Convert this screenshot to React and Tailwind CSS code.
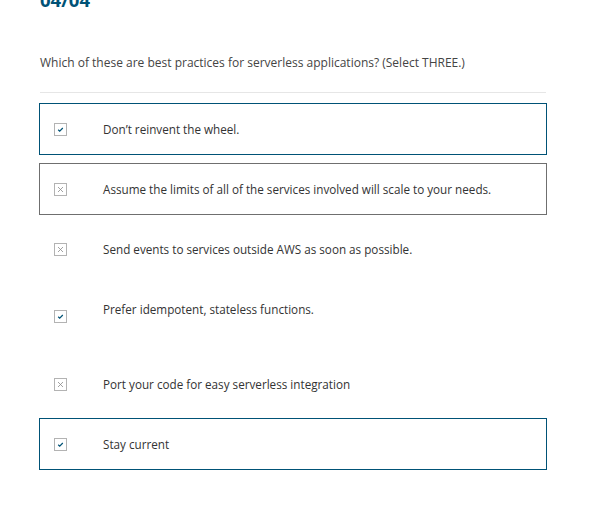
import React from "react";

const options = [
  { text: "Don’t reinvent the wheel.", checked: true, border: "sel" },
  { text: "Assume the limits of all of the services involved will scale to your needs.", checked: false, border: "gray" },
  { text: "Send events to services outside AWS as soon as possible.", checked: false, border: "none" },
  { text: "Prefer idempotent, stateless functions.", checked: true, border: "none", extra: true },
  { text: "Port your code for easy serverless integration", checked: false, border: "none" },
  { text: "Stay current", checked: true, border: "sel" },
];

function Box({ checked }) {
  return (
    <div className="w-[13px] h-[13px] border border-[#b3b3b3] bg-white flex items-center justify-center shrink-0">
      {checked ? (
        <svg width="9" height="9" viewBox="0 0 9 9">
          <path d="M2.2 4.8 L3.7 6.2 L6.8 3" fill="none" stroke="#005276" strokeWidth="1.2" />
        </svg>
      ) : (
        <svg width="9" height="9" viewBox="0 0 9 9">
          <path d="M2 2 L7 7 M7 2 L2 7" fill="none" stroke="#8a8a8a" strokeWidth="0.8" />
        </svg>
      )}
    </div>
  );
}

export default function App() {
  return (
    <div className="w-[613px] h-[515px] bg-white overflow-hidden" style={{ fontFamily: "'Open Sans', sans-serif" }}>
      <div className="px-10">
        <div className="text-[18.5px] leading-[28px] font-bold text-[#005276] -mt-[14px]">04/04</div>
        <div className="mt-[41px] text-[12px] leading-[16px] text-[#444]">
          Which of these are best practices for serverless applications? (Select THREE.)
        </div>
        <div className="mt-[21px] h-px bg-[#e6e6e6] w-[506px]"></div>
        <div className="mt-[10px] -ml-px w-[508px] flex flex-col gap-[8px]">
          {options.map((o, i) => (
            <div
              key={i}
              className={
                "flex items-center px-[14px] py-[18px] border " +
                (o.border === "sel"
                  ? "border-[#005276]"
                  : o.border === "gray"
                  ? "border-[#6f6f6f]"
                  : "border-transparent")
              }
            >
              <Box checked={o.checked} />
              <div className="ml-[36px] text-[11.7px] leading-[14px] text-[#333]">
                {o.text}
                {o.extra && <div className="h-[15px]"></div>}
              </div>
            </div>
          ))}
        </div>
      </div>
    </div>
  );
}
